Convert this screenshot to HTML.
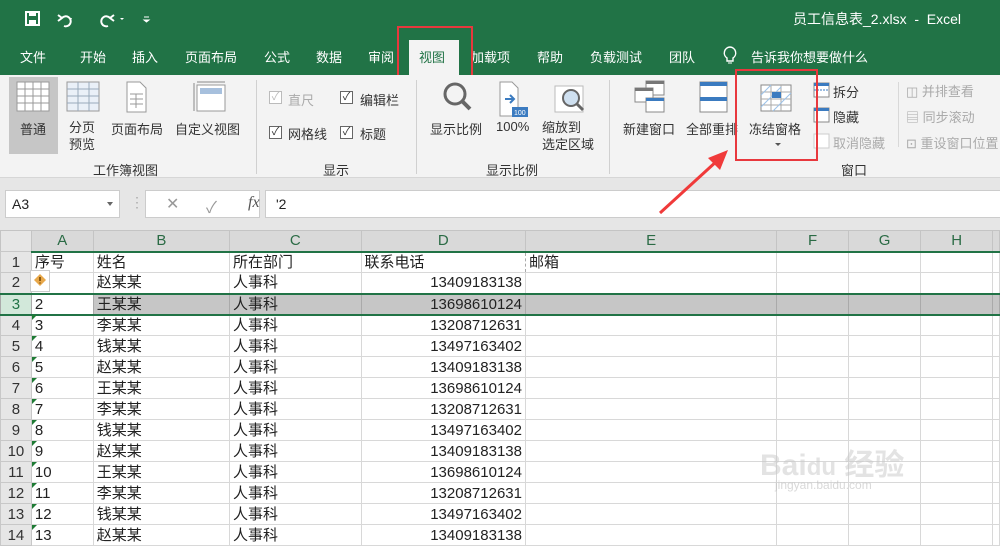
<!DOCTYPE html><html><head><meta charset="utf-8"><style>
*{margin:0;padding:0;box-sizing:border-box}
body{width:1000px;height:533px;overflow:hidden;position:relative;background:#fff;font-family:"Liberation Sans","Noto Sans CJK SC",sans-serif;color:#222}
.a{position:absolute;white-space:nowrap}
.t{font-size:13px;color:#fff;top:47px}
.r{font-size:13px;color:#333}
.g{font-size:13px;color:#aaa}
.cb{position:absolute;width:13px;height:13px;border:1px solid #666;background:#fff;font-size:11px;line-height:11px;text-align:center;color:#333}
table{position:absolute;left:0;top:230px;border-collapse:collapse;font-size:15px}
td{height:21px;border:1px solid #d8d8d8;padding:0 3px;line-height:19px;white-space:nowrap;overflow:hidden}
tr.h td{background:#d9d9d9;color:#2b6b45;text-align:center;height:21px;border-color:#c4c4c4;font-size:15px;border-bottom:2px solid #217346}
td.n{background:#e6e6e6;color:#333;text-align:center;font-size:15px;border-color:#c8c8c8;padding:0}
td.p{text-align:right}
td.e{border-left:1px dashed #aaa}
td.d{border-right:1px dashed #aaa}
tr.s td{background:#c6c6c6;border-color:#aaa}
tr.s td.n{background:#d2e8da;color:#217346}
tr.s td.a3{background:#fff}
.tri{position:absolute;width:0;height:0;border-top:5px solid #1e7b34;border-right:5px solid transparent}
</style></head><body>
<div class="a" style="left:0;top:0;width:1000px;height:75px;background:#217346"></div>
<svg class="a" style="left:24px;top:10px" width="130" height="18"><rect x="2" y="2" width="13" height="13" fill="none" stroke="#fff" stroke-width="2"/><rect x="5" y="2" width="7" height="4" fill="#fff"/><rect x="5" y="10" width="7" height="5" fill="#fff"/><path d="M38 8 a5 5 0 1 1 2 8 M34 5 l4 3 l-4 3" fill="none" stroke="#fff" stroke-width="2"/><path d="M46 8 l2 0 l-1 2z" fill="#fff"/><path d="M86 8 a5 5 0 1 0 -2 8 M90 5 l-4 3 l4 3" fill="none" stroke="#fff" stroke-width="2"/><path d="M96 8 l4 0 l-2 2z" fill="#fff"/><path d="M120 7h5 M120 10 l5 0 l-2.5 2z" stroke="#fff" fill="#fff"/></svg>
<div class="a" style="left:793px;top:9px;font-size:14px;color:#fff">员工信息表_2.xlsx &nbsp;- &nbsp;Excel</div>
<div class="a t" style="left:20px">文件</div><div class="a t" style="left:80px">开始</div><div class="a t" style="left:132px">插入</div><div class="a t" style="left:185px">页面布局</div><div class="a t" style="left:264px">公式</div><div class="a t" style="left:316px">数据</div><div class="a t" style="left:368px">审阅</div>
<div class="a" style="left:409px;top:40px;width:50px;height:36px;background:#f3f3f3"></div>
<div class="a t" style="left:419px;color:#217346">视图</div>
<div class="a t" style="left:471px">加载项</div><div class="a t" style="left:537px">帮助</div><div class="a t" style="left:590px">负载测试</div><div class="a t" style="left:669px">团队</div>
<svg class="a" style="left:722px;top:45px" width="16" height="20"><path d="M8 2a6 6 0 0 0-3 11v3h6v-3a6 6 0 0 0-3-11z" fill="none" stroke="#fff" stroke-width="1.4"/><path d="M6 18h4" stroke="#fff"/></svg>
<div class="a t" style="left:751px">告诉我你想要做什么</div>
<div class="a" style="left:397px;top:26px;width:76px;height:52px;border:2px solid #e8383d"></div>
<div class="a" style="left:0;top:75px;width:1000px;height:103px;background:#f3f3f3;border-bottom:1px solid #d6d6d6"></div>
<div class="a" style="left:9px;top:77px;width:49px;height:77px;background:#c6c6c6"></div>
<svg class="a" style="left:14px;top:81px" width="220" height="36"><g stroke="#999" fill="#fff"><rect x="3" y="1" width="32" height="29"/><path d="M3 8h32M3 15h32M3 22h32M11 1v29M19 1v29M27 1v29" fill="none"/><rect x="53" y="1" width="32" height="29" fill="#eaf0f8"/><path d="M53 8h32M53 15h32M53 22h32M64 1v29M75 1v29" fill="none" stroke="#9ab"/><path d="M113 1h13l6 6v24h-19z"/><path d="M116 13h13M116 18h13M116 23h13M122 13v14" fill="none"/><rect x="183" y="4" width="28" height="26"/></g><rect x="186" y="7" width="22" height="6" fill="#a7c0dd"/><path d="M180 2v28M183 1h28" stroke="#888" fill="none"/></svg>
<div class="a r" style="left:20px;top:119px">普通</div>
<div class="a r" style="left:69px;top:119px;line-height:17px">分页<br>预览</div>
<div class="a r" style="left:111px;top:119px">页面布局</div>
<div class="a r" style="left:175px;top:119px">自定义视图</div>
<div class="a r" style="left:93px;top:160px">工作簿视图</div>
<div class="a" style="left:256px;top:80px;width:1px;height:94px;background:#d0d0d0"></div>
<div class="cb" style="left:269px;top:91px;border-color:#bbb;color:#bbb">✓</div><div class="a g" style="left:288px;top:90px">直尺</div>
<div class="cb" style="left:340px;top:91px">✓</div><div class="a r" style="left:360px;top:90px">编辑栏</div>
<div class="cb" style="left:269px;top:126px">✓</div><div class="a r" style="left:288px;top:124px">网格线</div>
<div class="cb" style="left:340px;top:126px">✓</div><div class="a r" style="left:360px;top:124px">标题</div>
<div class="a r" style="left:323px;top:160px">显示</div>
<div class="a" style="left:416px;top:80px;width:1px;height:94px;background:#d0d0d0"></div>
<svg class="a" style="left:440px;top:80px" width="170" height="40"><circle cx="15" cy="14" r="10" fill="none" stroke="#666" stroke-width="3"/><path d="M22 21l8 8" stroke="#666" stroke-width="4"/><path d="M60 2h12l6 6v28h-18z" fill="#fff" stroke="#999"/><path d="M65 19h8M70 15l4 4-4 4" stroke="#3b7bc0" stroke-width="2" fill="none"/><rect x="72" y="27" width="16" height="10" fill="#3b7bc0"/><text x="74" y="35" font-size="7" fill="#fff" font-family="Liberation Sans">100</text><rect x="115" y="6" width="28" height="26" fill="#fff" stroke="#bbb"/><circle cx="131" cy="18" r="8" fill="#cfe0f0" stroke="#666" stroke-width="2"/><path d="M137 24l6 6" stroke="#666" stroke-width="3"/></svg>
<div class="a r" style="left:430px;top:119px">显示比例</div>
<div class="a r" style="left:496px;top:119px">100%</div>
<div class="a r" style="left:542px;top:119px;line-height:17px">缩放到<br>选定区域</div>
<div class="a r" style="left:486px;top:160px">显示比例</div>
<div class="a" style="left:609px;top:80px;width:1px;height:94px;background:#d0d0d0"></div>
<svg class="a" style="left:633px;top:80px" width="200" height="36"><g fill="#fff" stroke="#888"><rect x="13" y="1" width="18" height="14"/><rect x="2" y="8" width="18" height="14"/><rect x="13" y="18" width="18" height="14"/><rect x="67" y="2" width="27" height="30"/><rect x="128" y="5" width="30" height="26"/></g><rect x="13" y="1" width="18" height="3" fill="#777"/><rect x="2" y="8" width="18" height="3" fill="#777"/><rect x="13" y="18" width="18" height="3" fill="#3b7bc0"/><rect x="67" y="2" width="27" height="4" fill="#3b7bc0"/><rect x="67" y="17" width="27" height="4" fill="#3b7bc0"/><path d="M128 12h30M128 19h30M128 25h30M138 5v26M148 5v26" stroke="#aaa" fill="none"/><path d="M128 15l10-10M128 27l20-20M140 31l18-18" stroke="#9cc2e8"/><rect x="139" y="12" width="9" height="6" fill="#3b7bc0"/></svg>
<div class="a r" style="left:623px;top:119px">新建窗口</div>
<div class="a r" style="left:686px;top:119px">全部重排</div>
<div class="a r" style="left:749px;top:119px">冻结窗格</div>
<div class="a" style="left:775px;top:143px;border-top:3px solid #555;border-left:3px solid transparent;border-right:3px solid transparent"></div>
<svg class="a" style="left:813px;top:82px" width="20" height="70"><rect x="1" y="1" width="15" height="14" fill="#fff" stroke="#888"/><rect x="1" y="1" width="15" height="3" fill="#3b7bc0"/><path d="M1 8h15" stroke="#3b7bc0" stroke-dasharray="2 1"/><rect x="1" y="26" width="15" height="14" fill="#fff" stroke="#888"/><rect x="1" y="26" width="15" height="3" fill="#3b7bc0"/><rect x="1" y="52" width="15" height="14" fill="#fff" stroke="#ccc"/></svg>
<div class="a r" style="left:833px;top:82px">拆分</div>
<div class="a r" style="left:833px;top:107px">隐藏</div>
<div class="a g" style="left:833px;top:133px">取消隐藏</div>
<div class="a" style="left:898px;top:82px;width:1px;height:65px;background:#d8d8d8"></div>
<div class="a g" style="left:906px;top:81px">◫ 并排查看</div>
<div class="a g" style="left:906px;top:107px">▤ 同步滚动</div>
<div class="a g" style="left:906px;top:133px">⊡ 重设窗口位置</div>
<div class="a r" style="left:841px;top:160px">窗口</div>
<div class="a" style="left:735px;top:69px;width:83px;height:92px;border:2px solid #e8383d"></div>
<div class="a" style="left:0;top:178px;width:1000px;height:52px;background:#e6e6e6"></div>
<div class="a" style="left:5px;top:190px;width:115px;height:28px;background:#fff;border:1px solid #ccc;font-size:14px;padding:5px 6px">A3<span style="position:absolute;right:6px;top:11px;border-top:4px solid #666;border-left:3px solid transparent;border-right:3px solid transparent"></span></div>
<div class="a" style="left:130px;top:194px;color:#aaa;font-size:14px">⋮</div>
<div class="a" style="left:145px;top:190px;width:115px;height:28px;background:#fff;border:1px solid #ccc;font-size:16px;color:#999"><span style="position:absolute;left:20px;top:3px">✕</span><span style="position:absolute;left:60px;top:3px">✓</span><span style="position:absolute;left:102px;top:3px;font-family:'Liberation Serif';font-style:italic;color:#555">fx</span></div>
<div class="a" style="left:265px;top:190px;width:740px;height:28px;background:#fff;border:1px solid #ccc;font-size:14px;padding:5px 10px">'2</div>
<table>
<colgroup><col style="width:31px"><col style="width:62px"><col style="width:137px"><col style="width:132px"><col style="width:165px"><col style="width:253px"><col style="width:72px"><col style="width:73px"><col style="width:72px"><col style="width:5px"></colgroup>
<tr class="h"><td class="n" style="background:#e6e6e6;border-bottom:1px solid #c8c8c8"></td><td>A</td><td>B</td><td>C</td><td>D</td><td>E</td><td>F</td><td>G</td><td>H</td><td></td></tr>
<tr><td class="n">1</td><td>序号</td><td>姓名</td><td>所在部门</td><td class="d">联系电话</td><td class="e">邮箱</td><td></td><td></td><td></td><td></td></tr>
<tr style="border-bottom:2px solid #217346"><td class="n">2</td><td></td><td>赵某某</td><td>人事科</td><td class="p d">13409183138</td><td></td><td></td><td></td><td></td><td></td></tr>
<tr class="s" style="border-bottom:2px solid #217346"><td class="n">3</td><td class="a3">2</td><td>王某某</td><td>人事科</td><td class="p d">13698610124</td><td></td><td></td><td></td><td></td><td></td></tr>
<tr><td class="n">4</td><td>3</td><td>李某某</td><td>人事科</td><td class="p d">13208712631</td><td></td><td></td><td></td><td></td><td></td></tr>
<tr><td class="n">5</td><td>4</td><td>钱某某</td><td>人事科</td><td class="p d">13497163402</td><td></td><td></td><td></td><td></td><td></td></tr>
<tr><td class="n">6</td><td>5</td><td>赵某某</td><td>人事科</td><td class="p d">13409183138</td><td></td><td></td><td></td><td></td><td></td></tr>
<tr><td class="n">7</td><td>6</td><td>王某某</td><td>人事科</td><td class="p d">13698610124</td><td></td><td></td><td></td><td></td><td></td></tr>
<tr><td class="n">8</td><td>7</td><td>李某某</td><td>人事科</td><td class="p d">13208712631</td><td></td><td></td><td></td><td></td><td></td></tr>
<tr><td class="n">9</td><td>8</td><td>钱某某</td><td>人事科</td><td class="p d">13497163402</td><td></td><td></td><td></td><td></td><td></td></tr>
<tr><td class="n">10</td><td>9</td><td>赵某某</td><td>人事科</td><td class="p d">13409183138</td><td></td><td></td><td></td><td></td><td></td></tr>
<tr><td class="n">11</td><td>10</td><td>王某某</td><td>人事科</td><td class="p d">13698610124</td><td></td><td></td><td></td><td></td><td></td></tr>
<tr><td class="n">12</td><td>11</td><td>李某某</td><td>人事科</td><td class="p d">13208712631</td><td></td><td></td><td></td><td></td><td></td></tr>
<tr><td class="n">13</td><td>12</td><td>钱某某</td><td>人事科</td><td class="p d">13497163402</td><td></td><td></td><td></td><td></td><td></td></tr>
<tr><td class="n">14</td><td>13</td><td>赵某某</td><td>人事科</td><td class="p d">13409183138</td><td></td><td></td><td></td><td></td><td></td></tr>
</table>
<div class="a" style="left:0;top:229px;width:1000px;height:2px;background:transparent"></div>
<div class="a" style="left:30px;top:270px;width:20px;height:22px;background:#fff;border:1px solid #ccc"></div>
<svg class="a" style="left:33px;top:273px" width="14" height="14"><path d="M7 1l6 6-6 6-6-6z" fill="#e8a84a"/><path d="M7 4v4M7 9.5v1" stroke="#6b3d00" stroke-width="1.5"/></svg>
<div class="tri" style="left:32px;top:315px"></div><div class="tri" style="left:32px;top:336px"></div><div class="tri" style="left:32px;top:357px"></div><div class="tri" style="left:32px;top:378px"></div><div class="tri" style="left:32px;top:399px"></div><div class="tri" style="left:32px;top:420px"></div><div class="tri" style="left:32px;top:441px"></div><div class="tri" style="left:32px;top:462px"></div><div class="tri" style="left:32px;top:483px"></div><div class="tri" style="left:32px;top:504px"></div><div class="tri" style="left:32px;top:525px"></div>
<svg class="a" style="left:0;top:0" width="1000" height="533"><path d="M660 213L718 160" stroke="#f03a3a" stroke-width="3"/><path d="M728 150L708 158L720 170z" fill="#f03a3a"/></svg>
<div class="a" style="left:760px;top:440px;font-size:30px;color:rgba(200,200,200,.5);font-weight:bold">Bai<span style="font-size:24px">du</span> 经验</div>
<div class="a" style="left:775px;top:478px;font-size:12px;color:rgba(190,190,190,.6)">jingyan.baidu.com</div>
</body></html>
